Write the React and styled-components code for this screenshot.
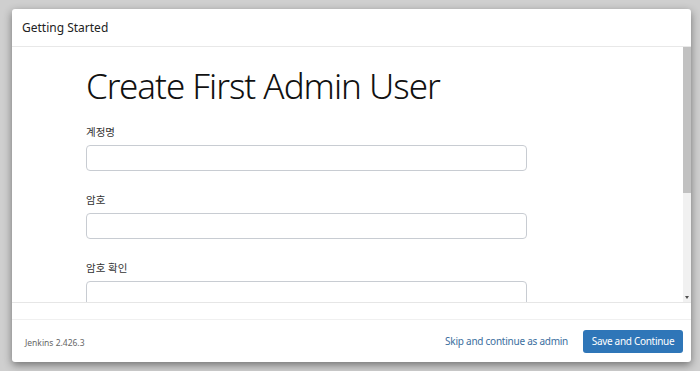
import React from 'react';
import styled, { createGlobalStyle } from 'styled-components';

const GlobalStyle = createGlobalStyle`
  html, body {
    margin: 0;
    padding: 0;
  }
  body {
    width: 700px;
    height: 371px;
    overflow: hidden;
    background: #cfcfcf;
    font-family: "Noto Sans", "Noto Sans CJK KR", sans-serif;
    color: #333;
  }
`;

const Stage = styled.div`
  box-sizing: border-box;
  width: 700px;
  height: 371px;
  padding: 9px 9px 9px 12px;
`;

const Dialog = styled.div`
  display: flex;
  flex-direction: column;
  height: 353px;
  background: #fff;
  border-radius: 3px;
  box-shadow: 0 3px 9px rgba(0, 0, 0, 0.45);
  overflow: hidden;
`;

const Header = styled.div`
  display: flex;
  align-items: center;
  height: 37px;
  padding-left: 10px;
  border-bottom: 1px solid #e8e8e8;
  font-size: 12px;
  color: #222;
`;

const BodyRow = styled.div`
  display: flex;
  height: 255px;
  border-bottom: 1px solid #e6e6e6;
`;

const Content = styled.div`
  flex: 1;
  overflow: hidden;
  padding: 18px 0 0 74px;
`;

const Title = styled.h1`
  margin: 0 0 17px;
  font-size: 35px;
  font-weight: 350;
  line-height: 42px;
  color: #111;
  letter-spacing: -1px;
`;

const Field = styled.div`
  display: flex;
  flex-direction: column;
  width: 441px;
  margin-bottom: 21px;
`;

const Label = styled.label`
  font-size: 10.5px;
  line-height: 16px;
  margin-bottom: 5px;
  color: #333;
`;

const Input = styled.input`
  box-sizing: border-box;
  height: 26px;
  width: 100%;
  border: 1px solid #c8ccd2;
  border-radius: 4px;
  outline: none;
`;

const ScrollTrack = styled.div`
  width: 8px;
  background: #f1f1f1;
  display: flex;
  flex-direction: column;
  justify-content: space-between;
  align-items: center;
`;

const ScrollThumb = styled.div`
  width: 8px;
  height: 146px;
  background: #c1c1c1;
`;

const ScrollArrow = styled.div`
  width: 0;
  height: 0;
  margin-bottom: 3px;
  border-left: 2.5px solid transparent;
  border-right: 2.5px solid transparent;
  border-top: 3px solid #505050;
`;

const Spacer = styled.div`
  height: 16px;
  border-bottom: 1px solid #f0f0f0;
`;

const Footer = styled.div`
  flex: 1;
  display: flex;
  align-items: center;
  padding: 0 8px 0 13px;
`;

const Version = styled.span`
  font-size: 8.5px;
  color: #666;
  margin-top: 3px;
`;

const Actions = styled.div`
  margin-left: auto;
  display: flex;
  align-items: center;
  gap: 15px;
`;

const SkipLink = styled.a`
  font-size: 10px;
  letter-spacing: -0.25px;
  color: #3b6e9e;
  text-decoration: none;
`;

const PrimaryButton = styled.button`
  width: 100px;
  height: 23px;
  border: none;
  border-radius: 3px;
  background: #2f76b8;
  color: #fff;
  font-family: inherit;
  font-size: 10px;
  letter-spacing: -0.3px;
  padding: 0;
`;

const fields = ['계정명', '암호', '암호 확인'];

export default function App() {
  return (
    <>
      <GlobalStyle />
      <Stage>
        <Dialog>
          <Header>Getting Started</Header>
          <BodyRow>
            <Content>
              <Title>Create First Admin User</Title>
              {fields.map((label) => (
                <Field key={label}>
                  <Label>{label}</Label>
                  <Input type={label === '계정명' ? 'text' : 'password'} />
                </Field>
              ))}
            </Content>
            <ScrollTrack>
              <ScrollThumb />
              <ScrollArrow />
            </ScrollTrack>
          </BodyRow>
          <Spacer />
          <Footer>
            <Version>Jenkins 2.426.3</Version>
            <Actions>
              <SkipLink href="#">Skip and continue as admin</SkipLink>
              <PrimaryButton>Save and Continue</PrimaryButton>
            </Actions>
          </Footer>
        </Dialog>
      </Stage>
    </>
  );
}
